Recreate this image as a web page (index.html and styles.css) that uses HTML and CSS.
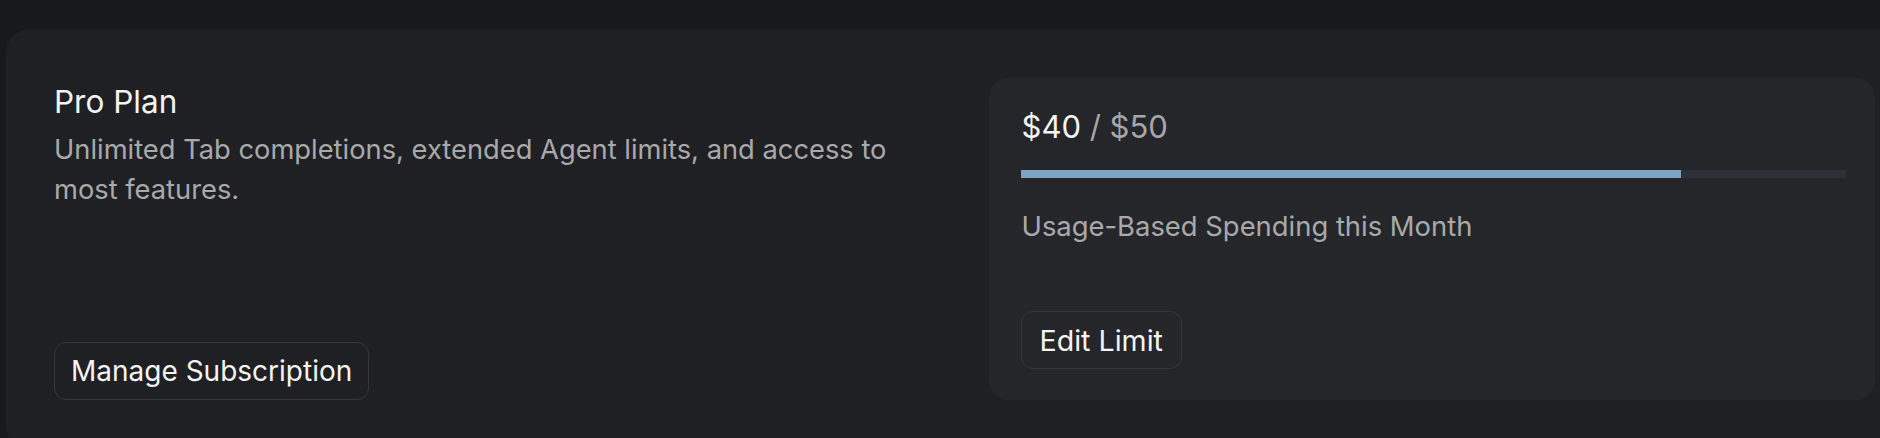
FILE: index.html
```html
<!DOCTYPE html>
<html lang="en">
<head>
<meta charset="utf-8">
<title>Plan</title>
<link rel="stylesheet" href="styles.css">
</head>
<body>
  <section class="plan-card">
    <div class="plan-info">
      <div class="plan-text">
        <h2 class="plan-title">Pro Plan</h2>
        <p class="plan-desc">Unlimited Tab completions, extended Agent limits, and access to most features.</p>
      </div>
      <button class="btn">Manage Subscription</button>
    </div>
    <div class="usage-card">
      <div class="usage-amount"><span class="used">$40</span> <span class="sep">/</span> <span class="limit">$50</span></div>
      <div class="bar"><div class="bar-fill" style="width: 80%"></div></div>
      <div class="usage-label">Usage-Based Spending this Month</div>
      <button class="btn btn-edit">Edit Limit</button>
    </div>
  </section>
</body>
</html>
```
FILE: styles.css
```css
html, body {
  margin: 0;
  padding: 0;
  overflow: hidden;
}
body {
  background: #18191c;
  font-family: Inter, "Noto Sans", "Liberation Sans", sans-serif;
  color: #f2f2f3;
  width: 1880px;
  height: 438px;
}
.plan-card {
  margin: 30px 0 0 6px;
  width: 1918px;
  box-sizing: border-box;
  background: #1f2023;
  border-radius: 22px;
  padding: 48px 49px 48px 48px;
  display: grid;
  grid-template-columns: 1fr 1fr;
  column-gap: 48px;
}
.plan-info {
  display: flex;
  flex-direction: column;
  justify-content: space-between;
  align-items: flex-start;
}
.plan-title {
  margin: 0;
  font-size: 31.5px;
  font-weight: 400;
  line-height: 48px;
  color: #f4f4f5;
}
.plan-desc {
  margin: 4px 0 0;
  font-size: 27.3px;
  line-height: 40px;
  color: #a9a9ab;
}
.btn {
  font-family: inherit;
  font-size: 28px;
  color: #f4f4f5;
  background: transparent;
  border: 1.5px solid #36373b;
  border-radius: 12px;
  height: 58px;
  line-height: 55px;
  padding: 0 16px;
  box-sizing: border-box;
  cursor: pointer;
}
.usage-card {
  background: #25262a;
  border-radius: 20px;
  padding: 33px 29px 31px 33px;
  display: flex;
  flex-direction: column;
  align-items: flex-start;
}
.usage-amount {
  font-size: 31px;
  line-height: 31px;
  color: #f4f4f5;
}
.usage-amount .sep,
.usage-amount .limit {
  color: #a6a6a8;
}
.bar {
  margin-top: 28px;
  margin-left: -1px;
  width: calc(100% + 1px);
  height: 8px;
  background: #2b2f36;
}
.bar-fill {
  height: 100%;
  background: #7fa3c4;
}
.usage-label {
  margin-top: 28px;
  font-size: 27.4px;
  line-height: 40px;
  color: #a9a9ab;
}
.btn-edit {
  margin-top: 65px;
  margin-left: -1px;
  font-size: 28.6px;
  padding: 0 18px;
}
```
